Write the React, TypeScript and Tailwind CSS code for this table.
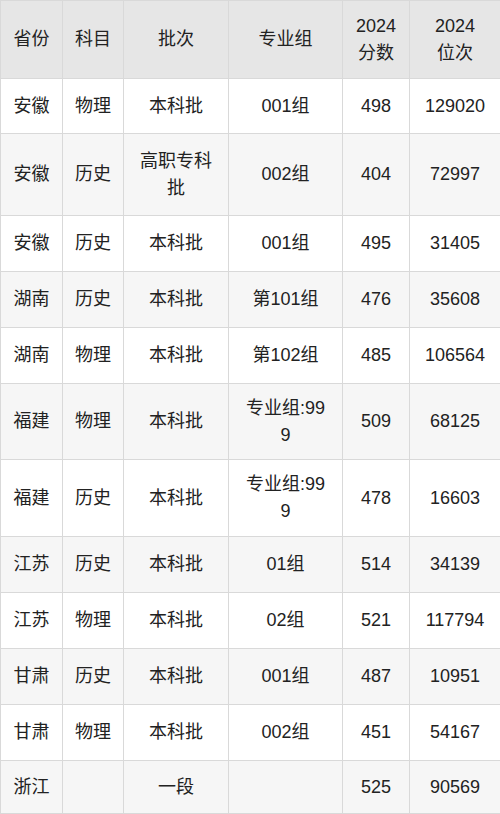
import React from 'react';

type Row = {
  province: string;
  subject: string;
  batch: string;
  group: string;
  score: string;
  rank: string;
  h: string;
};

const rows: Row[] = [
  { province: '安徽', subject: '物理', batch: '本科批', group: '001组', score: '498', rank: '129020', h: 'h-[55px]' },
  { province: '安徽', subject: '历史', batch: '高职专科批', group: '002组', score: '404', rank: '72997', h: 'h-[82px]' },
  { province: '安徽', subject: '历史', batch: '本科批', group: '001组', score: '495', rank: '31405', h: 'h-[56px]' },
  { province: '湖南', subject: '历史', batch: '本科批', group: '第101组', score: '476', rank: '35608', h: 'h-[56px]' },
  { province: '湖南', subject: '物理', batch: '本科批', group: '第102组', score: '485', rank: '106564', h: 'h-[56px]' },
  { province: '福建', subject: '物理', batch: '本科批', group: '专业组:999', score: '509', rank: '68125', h: 'h-[76px]' },
  { province: '福建', subject: '历史', batch: '本科批', group: '专业组:999', score: '478', rank: '16603', h: 'h-[77px]' },
  { province: '江苏', subject: '历史', batch: '本科批', group: '01组', score: '514', rank: '34139', h: 'h-[56px]' },
  { province: '江苏', subject: '物理', batch: '本科批', group: '02组', score: '521', rank: '117794', h: 'h-[56px]' },
  { province: '甘肃', subject: '历史', batch: '本科批', group: '001组', score: '487', rank: '10951', h: 'h-[56px]' },
  { province: '甘肃', subject: '物理', batch: '本科批', group: '002组', score: '451', rank: '54167', h: 'h-[56px]' },
  { province: '浙江', subject: '', batch: '一段', group: '', score: '525', rank: '90569', h: 'h-[53px]' },
];

const cell = 'border border-[#d9d9d9] px-[6px] py-0 text-center align-middle leading-[27px]';

const App: React.FC = () => {
  return (
    <div className="w-[500px] bg-white text-[18px] text-[#222] font-['Liberation_Sans','Noto_Sans_CJK_SC',sans-serif]">
      <table className="w-[500px] table-fixed border-collapse">
        <colgroup>
          <col className="w-[62px]" />
          <col className="w-[61px]" />
          <col className="w-[105px]" />
          <col className="w-[114px]" />
          <col className="w-[67px]" />
          <col className="w-[91px]" />
        </colgroup>
        <thead>
          <tr className="h-[78px] bg-[#e6e6e6]">
            <th className={`${cell} font-normal leading-[25px]`}>省份</th>
            <th className={`${cell} font-normal leading-[25px]`}>科目</th>
            <th className={`${cell} font-normal leading-[25px]`}>批次</th>
            <th className={`${cell} font-normal leading-[25px]`}>专业组</th>
            <th className={`${cell} font-normal leading-[25px]`}>2024<br />分数</th>
            <th className={`${cell} font-normal leading-[25px]`}>2024<br />位次</th>
          </tr>
        </thead>
        <tbody>
          {rows.map((r, i) => (
            <tr key={i} className={`${r.h} ${i % 2 === 1 ? 'bg-[#f6f6f6]' : 'bg-white'}`}>
              <td className={cell}>{r.province}</td>
              <td className={cell}>{r.subject}</td>
              <td className={`${cell} px-[9px]`}>{r.batch}</td>
              <td className={`${cell} px-[14px] break-all ${r.group.length > 5 ? 'leading-[23px]' : ''}`}>{r.group}</td>
              <td className={cell}>{r.score}</td>
              <td className={cell}>{r.rank}</td>
            </tr>
          ))}
        </tbody>
      </table>
    </div>
  );
};

export default App;
